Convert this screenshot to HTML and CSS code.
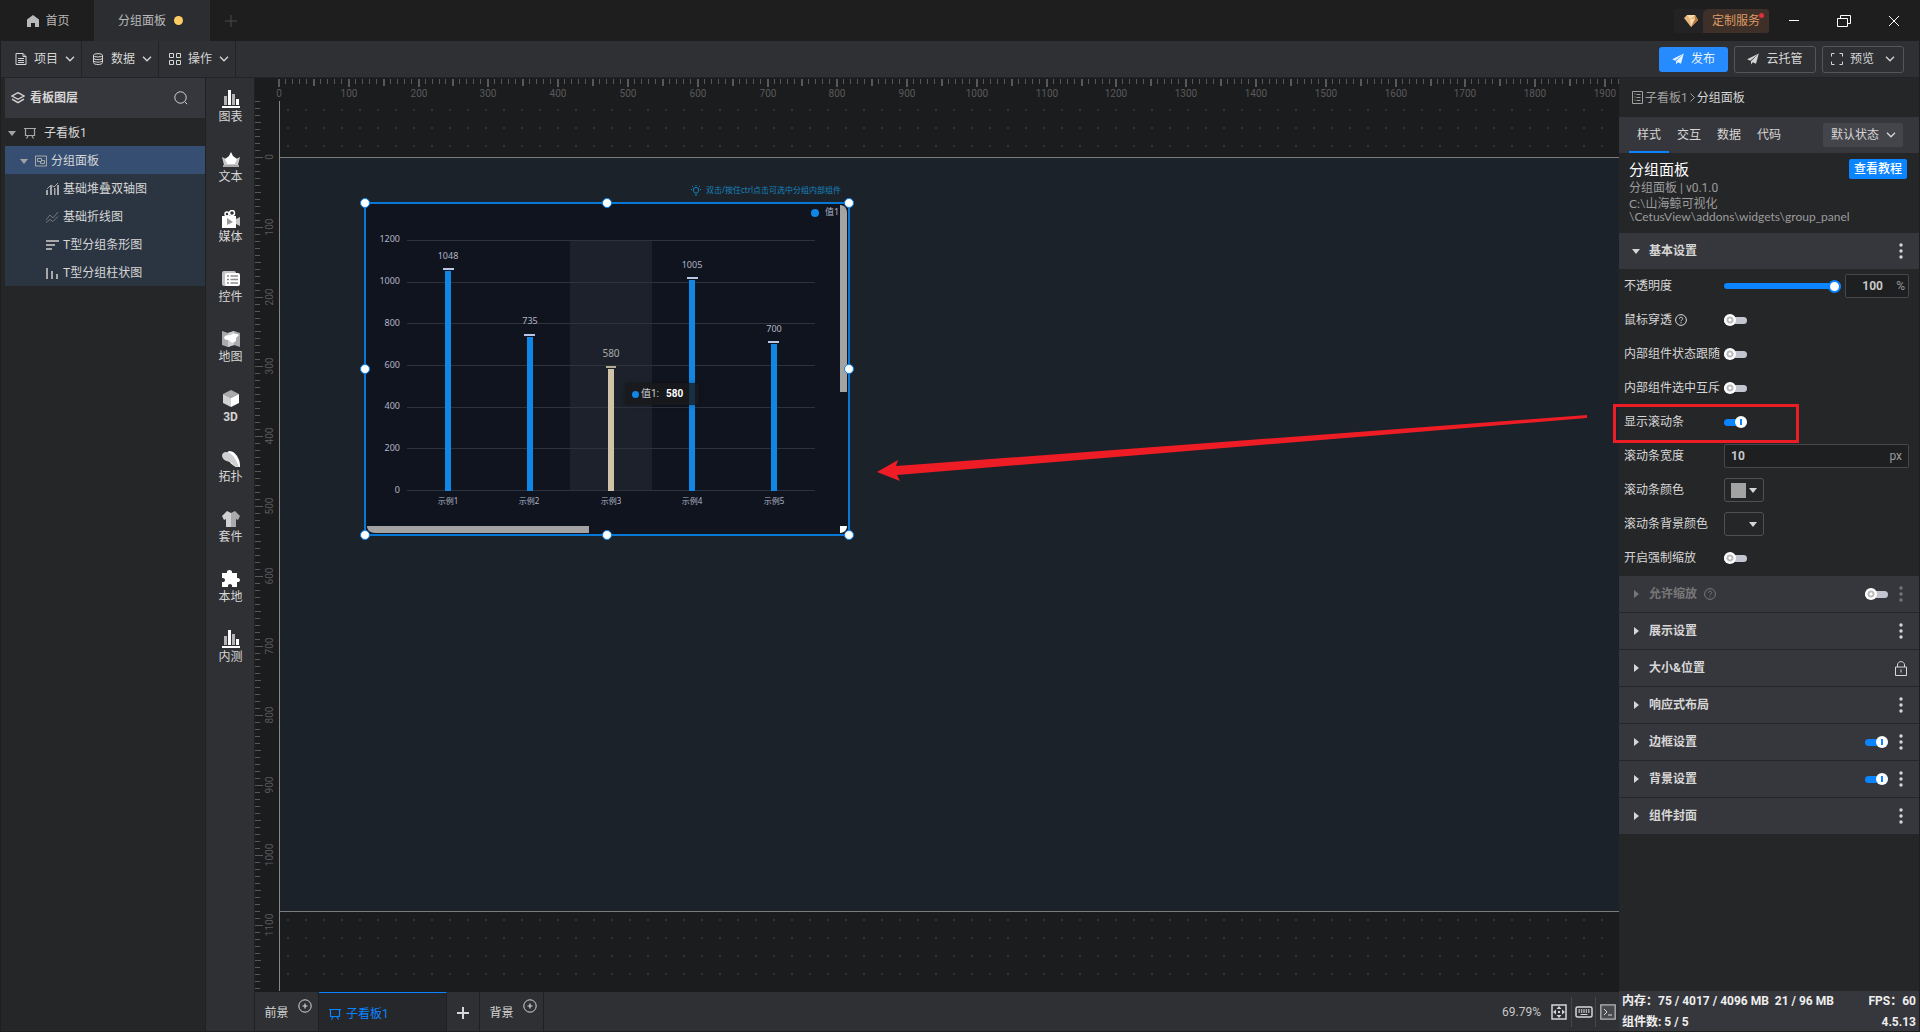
FILE: index.html
```html
<!DOCTYPE html>
<html lang="zh-CN">
<head>
    <meta charset="UTF-8">
    <meta name="viewport" content="width=device-width, initial-scale=1.0">
    <title>分组面板</title>
    <link rel="stylesheet" href="styles.css">
</head>
<body>
    <svg width="0" height="0" class="sprite">
        <symbol id="chev" viewBox="0 0 10 6"><path d="M1 .8l4 4 4-4" fill="none" stroke="currentColor" stroke-width="1.3"/></symbol>
        <symbol id="board" viewBox="0 0 12 12"><path d="M0 1.5h12M1.5 2v6.500h9V2M4 9l-1.500 2.500M8 9l1.500 2.500" fill="none" stroke="currentColor" stroke-width="1.200"/></symbol>
        <symbol id="plane" viewBox="0 0 12 12"><path d="M11.800.4L.2 6.200l3 1.500zM11.800.4L4 8.200v3.200l1.800-2.200 3.200 1.600z" fill="currentColor"/></symbol>
        <symbol id="help" viewBox="0 0 12 12"><circle cx="6" cy="6" r="5.400" fill="none" stroke="currentColor"/><path d="M4.400 4.800c0-2.200 3.300-2.100 3.300-.1C7.700 5.900 6 5.900 6 7.200M6 8.200v1.100" fill="none" stroke="currentColor"/></symbol>
        <symbol id="addc" viewBox="0 0 14 14"><circle cx="7" cy="7" r="6.200" fill="none" stroke="currentColor"/><path d="M4.500 7h5M7 4.500v5" stroke="currentColor" stroke-width="1.200"/></symbol>
        <symbol id="bars" viewBox="0 0 18 18"><path d="M0 16h18v2H0zM6 0h3v15H6zM14 9h3v6h-3z" fill="#fff"/><path d="M2 6h3v9H2zM10 4h3v11h-3z" fill="#b4b4b6"/></symbol>
        <symbol id="dots" viewBox="0 0 4 16"><circle cx="2" cy="2" r="1.700"/><circle cx="2" cy="8" r="1.700"/><circle cx="2" cy="14" r="1.700"/></symbol>
    </svg>

    <header class="titlebar">
        <button class="tab home">
            <svg width="12" height="12" viewBox="0 0 12 12"><path d="M6 0L0 4.500V12h4V8h4v4h4V4.500z" fill="currentColor"/></svg>首页
        </button>
        <button class="tab active">分组面板<i class="unsaved"></i></button>
        <button class="new-tab" aria-label="新建">
            <svg width="12" height="12" viewBox="0 0 12 12"><path d="M0 6h12M6 0v12" stroke="currentColor"/></svg>
        </button>
        <div class="spacer"></div>
        <button class="service">
            <span class="gem"><svg width="14" height="12" viewBox="0 0 14 12"><path d="M3 0l8 0 3 5-7 7L0 3z" fill="#e9b67a"/><path d="M3 0l3 4 5-4zM6 4l1 8 4-8z" fill="#f8dcae"/><path d="M11 0l3 5-7 7 4-8z" fill="#b97b43"/></svg></span>
            <span class="service-text">定制服务<i></i></span>
        </button>
        <div class="window-buttons">
            <button aria-label="最小化"><svg width="12" height="14" viewBox="0 0 12 14"><path d="M1 6.500h10" stroke="#fff"/></svg></button>
            <button aria-label="还原"><svg width="14" height="12" viewBox="0 0 14 12"><path d="M.5 3.500h10v8H.5zM3.500 3V.5h10v8H11" fill="none" stroke="#fff"/></svg></button>
            <button aria-label="关闭"><svg width="12" height="12" viewBox="0 0 12 12"><path d="M1 1l10 10M11 1L1 11" stroke="#fff"/></svg></button>
        </div>
    </header>

    <nav class="toolbar">
        <button class="menu">
            <svg width="12" height="12" viewBox="0 0 12 12"><path d="M1 .5h7L11 3.500v8H1zM8 .5v3h3M3 5.500h6M3 7.500h6M3 9.500h6" fill="none" stroke="currentColor"/></svg>项目<svg width="10" height="6"><use href="#chev"/></svg>
        </button>
        <button class="menu">
            <svg width="12" height="12" viewBox="0 0 12 12"><path d="M1.500 2.500v7c0 2.700 9 2.700 9 0v-7M1.500 5c0 2.200 9 2.200 9 0M1.500 7.500c0 2.200 9 2.200 9 0" fill="none" stroke="currentColor"/><ellipse cx="6" cy="2.300" rx="4.500" ry="1.700" fill="none" stroke="currentColor"/></svg>数据<svg width="10" height="6"><use href="#chev"/></svg>
        </button>
        <button class="menu">
            <svg width="12" height="12" viewBox="0 0 12 12"><path d="M.5.5h4v4h-4zM7.500.5h4v4h-4zM.5 7.500h4v4h-4zM7.500 7.500h4v4h-4z" fill="none" stroke="currentColor"/></svg>操作<svg width="10" height="6"><use href="#chev"/></svg>
        </button>
        <div class="spacer"></div>
        <div class="actions">
            <button class="action primary"><svg width="12" height="12"><use href="#plane"/></svg>发布</button>
            <button class="action"><svg width="12" height="12"><use href="#plane"/></svg>云托管</button>
            <button class="action"><svg width="12" height="12" viewBox="0 0 12 12"><path d="M.5 3.500v-3h3M8.500.5h3v3M11.500 8.500v3h-3M3.500 11.500h-3v-3" fill="none" stroke="currentColor"/></svg>预览<svg class="chev" width="10" height="6"><use href="#chev"/></svg></button>
        </div>
    </nav>

    <main class="workspace">
        <aside class="layers">
            <div class="layers-head">
                <svg width="14" height="12" viewBox="0 0 14 12"><path d="M7 .7l6 3.300-6 3.300L1 4zM1 7.200l6 3.500 6-3.500" fill="none" stroke="currentColor" stroke-width="1.400"/></svg>
                <h2>看板图层</h2>
                <button aria-label="搜索"><svg width="14" height="14" viewBox="0 0 14 14"><circle cx="6.500" cy="6.500" r="5.700" fill="none" stroke="currentColor"/><path d="M11 11l2.200 2.200" stroke="currentColor"/></svg></button>
            </div>
            <ul class="tree">
                <li class="root"><i class="caret"></i><svg width="12" height="12"><use href="#board"/></svg><span>子看板1</span></li>
                <li class="group selected"><i class="caret"></i><svg width="12" height="12" viewBox="0 0 12 12"><path d="M.5 1h11v10H.5zM2.500 3.500h4v3h-4zM7 5.500h2.500V8.500H5.500V7" fill="none" stroke="currentColor"/></svg><span>分组面板</span></li>
                <li class="leaf"><svg width="13" height="12" viewBox="0 0 13 12"><path d="M0 7h2v5H0zM4 3h2v9H4zM8 5h1.500v7H8zM11 2h2v10h-2z" fill="currentColor"/><path d="M1 6l4-4 3 2 4-4" fill="none" stroke="currentColor"/></svg><span>基础堆叠双轴图</span></li>
                <li class="leaf"><svg class="dim" width="13" height="12" viewBox="0 0 13 12"><path d="M0 9l4-5 3 3 5-6M0 11.500l4-3 3 2 5-5" fill="none" stroke="currentColor"/></svg><span>基础折线图</span></li>
                <li class="leaf"><svg width="13" height="12" viewBox="0 0 13 12"><path d="M0 1h13v2H0zM0 5h9v2H0zM0 9h6v2H0z" fill="currentColor"/></svg><span>T型分组条形图</span></li>
                <li class="leaf"><svg width="13" height="12" viewBox="0 0 13 12"><path d="M0 1h2v11H0zM5 4h2v8H5zM10 7h2v5h-2z" fill="currentColor"/></svg><span>T型分组柱状图</span></li>
            </ul>
        </aside>

        <nav class="widgets">
            <button><svg width="18" height="18"><use href="#bars"/></svg>图表</button>
            <button><svg width="18" height="18" viewBox="0 0 18 18"><path d="M0 7l4 2 1 5h8l1-5 4-2-2 8H2z" fill="#c8c8ca"/><path d="M9 2l2 4 4 3-2 5H5L3 9l4-3z" fill="#fff"/><path d="M1 15h16v2H1z" fill="#aaa"/></svg>文本</button>
            <button><svg width="18" height="18" viewBox="0 0 18 18"><circle cx="5" cy="4" r="2" fill="none" stroke="#fff" stroke-width="1.500"/><circle cx="10" cy="3" r="2.500" fill="none" stroke="#fff" stroke-width="1.500"/><path d="M0 6h14v12H0z" fill="#fff"/><path d="M14 9l4-2v9l-4-2z" fill="#c8c8ca"/><path d="M5 8l6 4-6 3z" fill="#999"/></svg>媒体</button>
            <button><svg width="18" height="18" viewBox="0 0 18 18"><rect x="0" y="1" width="14" height="15" rx="2" fill="#c4c4c6"/><rect x="3" y="3" width="15" height="13" rx="2" fill="#fff"/><path d="M5 6h2M5 9.500h2M5 13h2M8.500 6H16M8.500 9.500H16M8.500 13H16" stroke="#8d8d90" stroke-width="1.500"/></svg>控件</button>
            <button><svg width="18" height="18" viewBox="0 0 18 18"><path d="M0 1l6 2 6-2 6 2v14l-6-2-6 2-6-2z" fill="#aaaaac"/><path d="M6 3l6-2v14l-6 2z" fill="#cdcdcf"/><path d="M2 8c1-4 5-2 7-3 3-3 6-1 8 0l-3 3c1 5-4 5-5 4-2-1-1-2-3-2-3 0-3-1-4-2z" fill="#fff"/></svg>地图</button>
            <button><svg width="18" height="18" viewBox="0 0 18 18"><path d="M1 4l8-4 8 4-8 4z" fill="#aaaaac"/><path d="M1 4l8 4v9l-8-4z" fill="#d2d2d4"/><path d="M17 4L9 8v9l8-4z" fill="#fff"/></svg><b>3D</b></button>
            <button><svg width="18" height="18" viewBox="0 0 18 18"><path d="M7 1c5 0 8 4 10 9 1 3 1 5 1 7h-4C6 13 1 4 7 1z" fill="#fff"/><path d="M0 6c0-5 6-5 9-2 4 3 6 8 8 13C14 17 12 16 10 13 6 11 1 11 0 6z" fill="#cfcfd1"/></svg>拓扑</button>
            <button><svg width="18" height="18" viewBox="0 0 18 18"><path d="M5 1l4 2v14H4V9L2 10 0 6z" fill="#d0d0d2"/><path d="M13 1L9 3v14h5V9l2 1 2-4z" fill="#aaaaac"/></svg>套件</button>
            <button><svg width="18" height="18" viewBox="0 0 18 18"><path d="M0 3h5c-1-4 6-4 5 0h5v5c4-1 4 5 0 4v5h-5c1-4-5-4-4 0H0v-5c4 1 4-5 0-4z" fill="#fff"/></svg>本地</button>
            <button><svg width="18" height="18"><use href="#bars"/></svg>内测</button>
        </nav>

        <section class="editor">
            <div class="stage">
                <svg class="ruler ruler-x" id="rulerX"></svg>
                <svg class="ruler ruler-y" id="rulerY"></svg>
                <div class="canvas">
                    <div class="board"></div>
                </div>

                <div class="hint">
                    <svg width="10" height="11" viewBox="0 0 10 11"><path d="M3.500 8c0-1-1.200-1.500-1.200-3a2.700 2.700 0 015.400 0c0 1.500-1.200 2-1.200 3zM4 10h2M5 0v1M0 4.500h1M9 4.500h1M1.200 1.200l.8.8M8.800 1.200L8 2" fill="none" stroke="currentColor"/></svg>
                    双击/按住ctrl点击可选中分组内部组件
                </div>
                <div class="group-panel">
                    <svg class="chart" viewBox="0 0 484 332">
                        <rect x="205" y="37" width="82" height="250" fill="#1d212c"/>
                        <path d="M42 37.500h408M42 79.500h408M42 120.500h408M42 162.500h408M42 204.500h408M42 245.500h408M42 287.500h408" stroke="#2e323d"/>
                        <g class="axis-y">
                            <text x="35" y="39">1200</text>
                            <text x="35" y="81">1000</text>
                            <text x="35" y="123">800</text>
                            <text x="35" y="165">600</text>
                            <text x="35" y="206">400</text>
                            <text x="35" y="248">200</text>
                            <text x="35" y="290">0</text>
                        </g>
                        <g fill="#1086e5">
                            <rect x="80" y="68" width="6" height="220"/>
                            <rect x="162" y="134" width="6" height="154"/>
                            <rect x="324" y="77" width="6" height="211"/>
                            <rect x="406" y="141" width="6" height="147"/>
                        </g>
                        <rect x="243" y="166" width="6" height="122" fill="#cfc4a7"/>
                        <g fill="#b9c6e6">
                            <rect x="78" y="65" width="11" height="2"/>
                            <rect x="159" y="131" width="11" height="2"/>
                            <rect x="322" y="74" width="11" height="2"/>
                            <rect x="403" y="138" width="11" height="2"/>
                            <rect x="241" y="163" width="10" height="2" fill="#b3ab98"/>
                        </g>
                        <g class="value">
                            <text x="83" y="56">1048</text>
                            <text x="165" y="121">735</text>
                            <text x="246" y="154" class="hot">580</text>
                            <text x="327" y="65">1005</text>
                            <text x="409" y="129">700</text>
                        </g>
                        <g class="axis-x">
                            <text x="83" y="301">示例1</text>
                            <text x="164" y="301">示例2</text>
                            <text x="246" y="301">示例3</text>
                            <text x="327" y="301">示例4</text>
                            <text x="409" y="301">示例5</text>
                        </g>
                        <circle cx="450" cy="10" r="4" fill="#1086e5"/>
                        <text x="460" y="12" class="legend">值1</text>
                        <path d="M475 2c5 0 7 4 7 8v179h-7z" fill="#a3a3a3"/>
                        <path d="M2 323h222v7H10c-5 0-8-3-8-7z" fill="#a3a3a3"/>
                        <path d="M475 323h7c0 4-3 7-7 7z" fill="#fff"/>
                    </svg>
                    <div class="tooltip"><i></i>值1:<b>580</b></div>
                    <i class="handle n w"></i><i class="handle n c"></i><i class="handle n e"></i>
                    <i class="handle m w"></i><i class="handle m e"></i>
                    <i class="handle s w"></i><i class="handle s c"></i><i class="handle s e"></i>
                </div>
                <svg class="arrow" width="712" height="72" viewBox="0 0 712 72"><path d="M710 2L19 53l2-6L0 59l23 9-3-6L710 5z" fill="#ee1c24"/></svg>
            </div>

            <footer class="pages">
                <button class="page">前景<svg width="14" height="14"><use href="#addc"/></svg></button>
                <button class="page current"><svg width="12" height="12"><use href="#board"/></svg>子看板1</button>
                <button class="page add" aria-label="添加"><svg width="12" height="12" viewBox="0 0 12 12"><path d="M0 6h12M6 0v12" stroke="currentColor" stroke-width="2"/></svg></button>
                <button class="page">背景<svg width="14" height="14"><use href="#addc"/></svg></button>
                <div class="spacer"></div>
                <span class="zoom">69.79%</span>
                <button class="tool" aria-label="适应"><svg width="16" height="16" viewBox="0 0 16 16"><path d="M1 1h14v14H1z" fill="none" stroke="currentColor" stroke-width="1.500"/><path d="M8 2l2.500 3h-5zM8 14l2.500-3h-5zM2 8l3-2.500v5zM14 8l-3-2.500v5zM7 7h2v2H7z" fill="currentColor"/></svg></button>
                <button class="tool" aria-label="键盘"><svg width="18" height="12" viewBox="0 0 18 12"><rect x="1" y="1" width="16" height="10" rx="1.500" fill="none" stroke="currentColor" stroke-width="1.500"/><path d="M3.500 4h11M3.500 6h11" stroke="currentColor" stroke-width="1.300" stroke-dasharray="1.400 1"/><path d="M5.500 8.500h7" stroke="currentColor"/></svg></button>
                <button class="tool" aria-label="控制台"><svg width="16" height="16" viewBox="0 0 16 16"><path d="M.8.800h14.400v14.400H.8z" fill="#4a4b4f" stroke="#b5b5b5" stroke-width="1.300"/><path d="M4 5l3 3-3 3M8 11h4" fill="none" stroke="currentColor"/></svg></button>
            </footer>
        </section>

        <aside class="inspector">
            <div class="crumbs">
                <svg width="11" height="13" viewBox="0 0 11 13"><path d="M.5.5h10v12H.5zM2.500 3h1M2.500 6h1M2.500 9h1M4.500 3.500h4M4.500 6.500h4M4.500 9.500h4" fill="none" stroke="currentColor"/></svg>
                <a href="#">子看板1</a>
                <svg width="5" height="9" viewBox="0 0 5 9"><path d="M.5.5l4 4-4 4" fill="none" stroke="currentColor"/></svg>
                <span>分组面板</span>
            </div>
            <div class="tabs">
                <button class="on">样式</button><button>交互</button><button>数据</button><button>代码</button>
                <div class="spacer"></div>
                <div class="state">
                    <select aria-label="状态"><option>默认状态</option></select>
                    <svg width="10" height="6"><use href="#chev"/></svg>
                </div>
            </div>
            <div class="info">
                <div class="info-text">
                    <h1>分组面板</h1>
                    <p>分组面板 | v0.1.0</p>
                    <p class="path">C:\山海鲸可视化<br>\CetusView\addons\widgets\group_panel</p>
                </div>
                <button class="tutorial">查看教程</button>
            </div>

            <div class="section-head open"><i class="caret"></i><h3>基本设置</h3><div class="spacer"></div><button class="more" aria-label="更多"><svg width="4" height="16"><use href="#dots"/></svg></button></div>
            <div class="form">
                <div class="row"><label for="opacity">不透明度</label><input type="range" id="opacity" value="100"><div class="field short"><input type="text" value="100" aria-label="不透明度数值"><span>%</span></div></div>
                <div class="row"><label for="through">鼠标穿透<svg width="12" height="12"><use href="#help"/></svg></label><input type="checkbox" class="switch" id="through"></div>
                <div class="row"><label for="follow">内部组件状态跟随</label><input type="checkbox" class="switch" id="follow"></div>
                <div class="row"><label for="mutex">内部组件选中互斥</label><input type="checkbox" class="switch" id="mutex"></div>
                <div class="row marked"><label for="bar">显示滚动条</label><input type="checkbox" class="switch" id="bar" checked></div>
                <div class="row"><label for="barw">滚动条宽度</label><div class="field"><input type="text" id="barw" value="10"><span>px</span></div></div>
                <div class="row"><label for="barc">滚动条颜色</label><button class="color" id="barc"><i class="swatch grey"></i><i class="caret"></i></button></div>
                <div class="row"><label for="barbg">滚动条背景颜色</label><button class="color" id="barbg"><i class="swatch"></i><i class="caret"></i></button></div>
                <div class="row"><label for="force">开启强制缩放</label><input type="checkbox" class="switch" id="force"></div>
            </div>
            <div class="sections">
                <div class="section-head off"><i class="caret"></i><h3>允许缩放</h3><svg width="12" height="12"><use href="#help"/></svg><div class="spacer"></div><input type="checkbox" class="switch" aria-label="允许缩放"><button class="more" aria-label="更多"><svg width="4" height="16"><use href="#dots"/></svg></button></div>
                <div class="section-head"><i class="caret"></i><h3>展示设置</h3><div class="spacer"></div><button class="more" aria-label="更多"><svg width="4" height="16"><use href="#dots"/></svg></button></div>
                <div class="section-head"><i class="caret"></i><h3>大小&amp;位置</h3><div class="spacer"></div><button class="more" aria-label="锁定"><svg width="12" height="15" viewBox="0 0 12 15"><path d="M.5 6h11v8.500H.5zM2.500 6V4c0-4.500 7-4.500 7 0v2" fill="none" stroke="currentColor"/><path d="M6 8.500v3" stroke="currentColor"/></svg></button></div>
                <div class="section-head"><i class="caret"></i><h3>响应式布局</h3><div class="spacer"></div><button class="more" aria-label="更多"><svg width="4" height="16"><use href="#dots"/></svg></button></div>
                <div class="section-head"><i class="caret"></i><h3>边框设置</h3><div class="spacer"></div><input type="checkbox" class="switch" aria-label="边框设置" checked><button class="more" aria-label="更多"><svg width="4" height="16"><use href="#dots"/></svg></button></div>
                <div class="section-head"><i class="caret"></i><h3>背景设置</h3><div class="spacer"></div><input type="checkbox" class="switch" aria-label="背景设置" checked><button class="more" aria-label="更多"><svg width="4" height="16"><use href="#dots"/></svg></button></div>
                <div class="section-head"><i class="caret"></i><h3>组件封面</h3><div class="spacer"></div><button class="more" aria-label="更多"><svg width="4" height="16"><use href="#dots"/></svg></button></div>
            </div>
            <div class="stats">
                <div><span>内存：75 / 4017 / 4096 MB&nbsp; 21 / 96 MB</span><span>FPS：60</span></div>
                <div><span>组件数: 5 / 5</span><span>4.5.13</span></div>
            </div>
        </aside>
    </main>
    <script src="ruler.js"></script>
</body>
</html>
```
FILE: styles.css
```css
* {
    box-sizing: border-box;
}

body {
    margin: 0;
    height: 100vh;
    display: flex;
    flex-direction: column;
    overflow: hidden;
    padding: 0 1px 1px;
    background: #1e1e1e;
    color: #d6d6d6;
    font: 12px/18px Roboto, "Noto Sans CJK SC", sans-serif;
}

button, input, select {
    font: inherit;
    color: inherit;
    background: none;
    border: none;
    padding: 0;
    margin: 0;
}

button {
    cursor: pointer;
    display: flex;
    align-items: center;
    justify-content: center;
    white-space: nowrap;
}

svg {
    flex: none;
    display: block;
}

h1, h2, h3, p, ul {
    margin: 0;
    padding: 0;
}

.sprite {
    position: absolute;
}

.spacer {
    flex: 1;
}

/* title bar */
.titlebar {
    display: flex;
    height: 41px;
    flex: none;
}

.tab {
    width: 116px;
    gap: 8px;
    color: #b9b9b9;
}

.tab.home {
    width: 93px;
    gap: 6px;
    padding-left: 2px;
}

.tab.active {
    padding-right: 3px;
    background: #2c2d31;
}

.unsaved {
    width: 9px;
    height: 9px;
    border-radius: 50%;
    background: #ffcb66;
}

.new-tab {
    width: 42px;
    color: #4a4a4a;
}

.service {
    align-self: center;
    height: 24px;
    border-radius: 3px;
    background: #232326;
}

.gem {
    width: 29px;
    padding-left: 10px;
}

.service-text {
    position: relative;
    height: 24px;
    line-height: 24px;
    padding: 0 9px;
    background: #3e3029;
    border-radius: 6px 3px 3px 0;
    color: #dc9a64;
}

.service-text i {
    position: absolute;
    top: 4px;
    right: 5px;
    width: 5px;
    height: 5px;
    border-radius: 50%;
    background: #dd3038;
}

.window-buttons {
    display: flex;
}

.window-buttons button {
    width: 50px;
}

/* toolbar */
.toolbar {
    display: flex;
    height: 36px;
    flex: none;
    background: #2f3034;
}

.menu {
    justify-content: flex-start;
    width: 77px;
    gap: 7px;
    padding-left: 10px;
    border-right: 1px solid #222326;
}

.menu:first-child {
    width: 81px;
    padding-left: 14px;
}

.actions {
    display: flex;
    align-items: center;
    gap: 6px;
    padding-right: 15px;
}

.action {
    width: 82px;
    height: 27px;
    gap: 7px;
    border: 1px solid #55565a;
    border-radius: 3px;
}

.action .chev {
    margin-left: 4px;
}

.action.primary {
    width: 69px;
    height: 25px;
    border: none;
    background: #258bff;
    color: #e8f2ff;
}

/* workspace */
.workspace {
    flex: 1;
    display: flex;
    min-height: 0;
    border-top: 1px solid #222326;
}

.layers {
    width: 204px;
    padding-left: 4px;
    flex: none;
    background: #252628;
}

.layers-head {
    display: flex;
    align-items: center;
    gap: 5px;
    height: 40px;
    padding: 0 17px 0 6px;
    background: #36373c;
}

.layers-head h2 {
    flex: 1;
    font-size: 12px;
}

.tree {
    list-style: none;
}

.tree li {
    display: flex;
    align-items: center;
    height: 28px;
    gap: 4px;
    padding-top: 2px;
}

.tree svg {
    color: #a8a8a8;
}

.tree svg.dim {
    color: #6f7780;
}

.caret {
    flex: none;
    border: 4px solid transparent;
    border-top: 5px solid #a3a3a3;
    border-bottom: none;
}

.tree .root {
    padding-left: 3px;
    gap: 8px;
}

.tree .group {
    padding-left: 15px;
}

.tree .group svg {
    margin-left: 3px;
}

.tree .leaf {
    padding-left: 41px;
    background: #2b3542;
}

.tree .selected {
    background: #354e72;
}

.widgets {
    width: 50px;
    flex: none;
    background: #2f3034;
    border: solid #1f2022;
    border-width: 0 1px;
}

.widgets button {
    flex-direction: column;
    justify-content: flex-start;
    width: 100%;
    height: 60px;
    padding: 12px 0 0 1px;
}

/* editor */
.editor {
    flex: 1;
    min-width: 0;
    display: flex;
    flex-direction: column;
}

.stage {
    position: relative;
    flex: 1;
    min-height: 0;
    display: grid;
    grid-template: 23px 1fr / 24px 1fr;
    background: #1b1c1d;
}

.ruler {
    overflow: hidden;
    fill: #5c5757;
    font-size: 10px;
}

.ruler text {
    text-anchor: middle;
    fill: #5a5a5c;
}

.ruler-x {
    grid-area: 1 / 1 / 2 / 3;
    width: 100%;
    height: 23px;
}

.ruler-y {
    grid-area: 1 / 1 / 3 / 2;
    width: 24px;
    height: 100%;
}

.canvas {
    grid-area: 2 / 2;
    padding: 56px 0 79px;
    border-left: 1px solid #868686;
    background: linear-gradient(#323335, #323335) 7px 8px / 18px 18px;
    background: conic-gradient(from 270deg at 2px 2px, #323335 90deg, transparent 0) 7px 8px / 18px 18px;
}

.board {
    height: 100%;
    background: #1c222a;
    border: solid #7c7c7c;
    border-width: 1px 0;
}

.hint {
    position: absolute;
    left: 436px;
    top: 103px;
    display: flex;
    align-items: center;
    gap: 5px;
    font: 8px/18px "Noto Sans", "Noto Sans CJK SC", sans-serif;
    color: #1583bd;
    white-space: nowrap;
}

.group-panel {
    position: absolute;
    left: 110px;
    top: 125px;
    width: 484px;
    height: 332px;
    background: #10141f;
    outline: 2px solid #0878d6;
    outline-offset: -1px;
}

.chart {
    width: 100%;
    font: 9px "Noto Sans", "Noto Sans CJK SC", sans-serif;
    fill: #b0b5c6;
}

.axis-y {
    text-anchor: end;
}

.value {
    text-anchor: middle;
}

.value .hot {
    font-size: 10px;
    fill: #a9a9a9;
}

.axis-x {
    text-anchor: middle;
    font-size: 8px;
}

.tooltip {
    position: absolute;
    left: 260px;
    top: 180px;
    display: flex;
    align-items: center;
    width: 74px;
    height: 22px;
    padding-left: 7px;
    border-radius: 3px;
    background: rgba(25, 25, 28, .8);
    box-shadow: 0 0 4px rgba(0, 0, 0, .3);
    font-size: 10px;
    color: #ccc;
}

.tooltip i {
    width: 7px;
    height: 7px;
    margin-right: 2px;
    border-radius: 50%;
    background: #1086e5;
}

.tooltip b {
    margin-left: 7px;
    color: #fff;
}

.handle {
    position: absolute;
    width: 10px;
    height: 10px;
    margin: -5px;
    border-radius: 50%;
    border: 1px solid #0a84f0;
    background: #fff;
}

.handle.n { top: 0; }
.handle.m { top: 50%; }
.handle.s { top: 100%; }
.handle.w { left: 0; }
.handle.c { left: 50%; }
.handle.e { left: 100%; }

.arrow {
    position: absolute;
    left: 622px;
    top: 335px;
}

.pages {
    display: flex;
    align-items: center;
    height: 40px;
    flex: none;
    background: #2f3034;
    border-top: 1px solid #1b1c1d;
}

.page {
    height: 39px;
    width: 64px;
    gap: 9px;
    padding: 3px 0 0 3px;
    border-right: 1px solid #1f2022;
}

.page svg {
    margin-bottom: 14px;
}

.page.current {
    width: 128px;
    gap: 5px;
    justify-content: flex-start;
    padding: 3px 0 0 10px;
    background: #26272a;
    color: #0a84ff;
    border-top: 1px solid #0a84ff;
}

.page.add {
    width: 33px;
    padding-left: 0;
}

.page.current svg,
.page.add svg {
    margin: 0;
}

.zoom {
    margin-right: 6px;
    color: #c8c8c8;
}

.tool {
    width: 24px;
    height: 30px;
    border-left: 1px solid #454649;
}

.zoom + .tool {
    border: none;
}

/* inspector */
.inspector {
    width: 300px;
    flex: none;
    display: flex;
    flex-direction: column;
    background: #252628;
}

.crumbs {
    display: flex;
    align-items: center;
    height: 39px;
    gap: 2px;
    padding-left: 13px;
    color: #a0a0a0;
}

.crumbs a {
    color: inherit;
    text-decoration: none;
}

.crumbs span {
    color: #d6d6d6;
}

.tabs {
    display: flex;
    align-items: center;
    height: 36px;
    padding: 0 16px 0 10px;
    background: #36373c;
}

.tabs > button {
    width: 40px;
    height: 36px;
    border: solid transparent;
    border-width: 2px 0;
}

.tabs > .on {
    border-bottom-color: #0a84ff;
}

.state {
    position: relative;
    color: #d6d6d6;
}

.state select {
    appearance: none;
    width: 80px;
    height: 24px;
    padding-left: 8px;
    border-radius: 2px;
    background: #44454b;
}

.state svg {
    position: absolute;
    right: 7px;
    top: 9px;
    pointer-events: none;
}

.info {
    display: flex;
    justify-content: space-between;
    align-items: flex-start;
    height: 80px;
    padding: 6px 12px 0 10px;
    color: #9c9c9c;
}

.info-text {
    flex: 1;
    width: 0;
    white-space: nowrap;
}

.info h1 {
    font-size: 15px;
    line-height: 22px;
    font-weight: 400;
    color: #fff;
}

.info p {
    line-height: 14px;
}

.info .path {
    font-family: Lato, "Noto Sans CJK SC", sans-serif;
    line-height: 13px;
    padding-top: 2px;
}

.tutorial {
    height: 20px;
    padding: 0 5px;
    border-radius: 2px;
    background: #0a84ff;
    color: #fff;
    font-weight: 500;
}

.section-head {
    display: flex;
    align-items: center;
    height: 36px;
    padding: 0 10px 0 15px;
    background: #36373c;
}

.section-head h3 {
    margin-right: 7px;
    font-size: 12px;
}

.section-head .caret {
    margin-right: 10px;
    border: 4px solid transparent;
    border-left: 5px solid #d6d6d6;
    border-right: none;
}

.section-head.open .caret {
    margin: 0 9px 0 -2px;
    border: 4px solid transparent;
    border-top: 5px solid #d6d6d6;
    border-bottom: none;
}

.section-head.off h3,
.section-head.off > svg,
.section-head.off .more,
.section-head.off .caret {
    opacity: .4;
}

.more {
    width: 16px;
    margin-left: 5px;
    fill: currentColor;
}

.sections {
    display: flex;
    flex-direction: column;
    gap: 1px;
    flex: 1;
}

.form {
    padding-bottom: 1px;
}

.row {
    position: relative;
    display: flex;
    align-items: center;
    height: 34px;
    padding: 0 10px 0 5px;
    gap: 4px;
}

.row label {
    display: flex;
    align-items: center;
    gap: 3px;
    width: 96px;
    white-space: nowrap;
}

/* red frame around the scrollbar switch */
.marked::after {
    content: "";
    position: absolute;
    inset: -1px 120px -4px -6px;
    border: 3px solid #ee1c24;
    pointer-events: none;
}

.field {
    display: flex;
    align-items: center;
    flex: 1;
    height: 24px;
    padding: 0 6px;
    border: 1px solid #47484b;
    border-radius: 2px;
    background: #1e1f21;
    color: #999;
}

.field input {
    flex: 1;
    min-width: 0;
    font-family: "Liberation Sans Narrow", Roboto, sans-serif;
    font-weight: 700;
    color: #c8c8c8;
    outline: none;
}

.field.short {
    flex: none;
    width: 64px;
    padding: 0 3px;
}

.field.short input {
    text-align: center;
}

input[type="range"] {
    appearance: none;
    flex: 1;
    min-width: 0;
    height: 6px;
    border-radius: 3px;
    background: #0a84ff;
}

input[type="range"]::-webkit-slider-thumb {
    appearance: none;
    width: 13px;
    height: 13px;
    border-radius: 50%;
    border: 2px solid #0a84ff;
    background: #fff;
}

.switch {
    appearance: none;
    display: flex;
    align-items: center;
    width: 23px;
    height: 7px;
    border-radius: 4px;
    background: #c3c6d0;
}

.switch::before {
    content: "";
    width: 12px;
    height: 12px;
    flex: none;
    border-radius: 50%;
    background: radial-gradient(circle, #fff 1px, #bbb 2px, #bbb 3px, #fff 4px);
}

.switch:checked {
    justify-content: flex-end;
    background: #0a84ff;
}

.switch:checked::before {
    background: linear-gradient(#0a84ff, #0a84ff) center / 2px 6px no-repeat #fff;
}

.color {
    gap: 3px;
    width: 40px;
    height: 24px;
    border: 1px solid #505154;
    border-radius: 3px;
}

.color .caret {
    border-top-color: #d6d6d6;
}

.swatch {
    width: 15px;
    height: 15px;
}

.swatch.grey {
    background: #a3a3a3;
}

.stats {
    height: 40px;
    flex: none;
    padding: 1px 3px 0;
    background: #36373c;
    color: #eee;
    font-family: "Liberation Sans Narrow", Roboto, "Noto Sans CJK SC", sans-serif;
    font-weight: 700;
}

.stats div {
    display: flex;
    justify-content: space-between;
    height: 21px;
}
```
FILE: ruler.js
```javascript
const STEP = 6.979; // one tick is 10 board units
const NS = 'http://www.w3.org/2000/svg';

function add(svg, name, attrs, text) {
    const el = document.createElementNS(NS, name);
    for (const key in attrs) el.setAttribute(key, attrs[key]);
    if (text !== undefined) el.textContent = text;
    svg.appendChild(el);
}

function draw() {
    const rx = document.getElementById('rulerX');
    const ry = document.getElementById('rulerY');
    rx.textContent = '';
    ry.textContent = '';

    for (let i = 0; 23 + i * STEP < rx.clientWidth; i++) {
        const x = Math.round(23 + i * STEP);
        const big = i % 5 === 0;
        add(rx, 'rect', { x: x, y: 1, width: big ? 2 : 1, height: i % 10 === 0 ? 8 : big ? 7 : 5 });
        if (i % 10 === 0) add(rx, 'text', { x: x + 1, y: 19 }, i * 10);
    }

    for (let i = -8; 79 + i * STEP < ry.clientHeight; i++) {
        const y = Math.round(79 + i * STEP);
        const big = i % 5 === 0;
        add(ry, 'rect', { x: 0, y: y, width: i % 10 === 0 ? 8 : big ? 6 : 5, height: 1 });
        if (i % 10 === 0) add(ry, 'text', { transform: `translate(18 ${y}) rotate(-90)` }, i * 10);
    }
}

draw();
window.addEventListener('resize', draw);
```
